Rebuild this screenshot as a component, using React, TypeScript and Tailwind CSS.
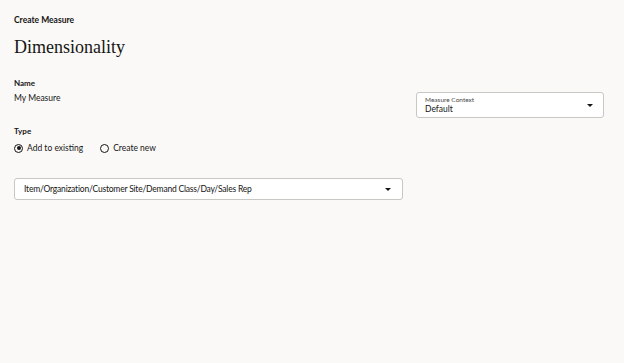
import React from "react";

const sans = { fontFamily: "Lato, 'Noto Sans', sans-serif" };

function Caret() {
  return (
    <svg width="6" height="3" viewBox="0 0 6 3" className="block">
      <path d="M0 0 H6 L3 3 Z" fill="#161513" />
    </svg>
  );
}

function Radio({ checked, label }: { checked: boolean; label: string }) {
  return (
    <div className="flex items-center gap-[4px]">
      <span className="w-[9px] h-[9px] rounded-full border border-[#161513] flex items-center justify-center">
        {checked && <span className="w-[4px] h-[4px] rounded-full bg-[#161513]" />}
      </span>
      <span className="text-[8.5px] leading-[12px] text-[#161513]">{label}</span>
    </div>
  );
}

export default function App() {
  return (
    <div className="w-[624px] h-[363px] bg-[#faf9f8] text-[#161513] overflow-hidden" style={sans}>
      <div className="pl-[14px] pr-[20px] pt-[14px]">
        <div className="text-[8.5px] leading-[12px] font-bold">Create Measure</div>
        <div
          className="mt-[9px] text-[18px] leading-[24px]"
          style={{ fontFamily: "'Liberation Serif', 'Times New Roman', serif" }}
        >
          Dimensionality
        </div>
        <div className="flex justify-between mt-[19px]">
          <div className="flex flex-col">
            <div className="text-[8px] leading-[10px] font-bold">Name</div>
            <div className="mt-[4px] text-[8.5px] leading-[12px]">My Measure</div>
          </div>
          <div className="mt-[14px] w-[188px] h-[26px] border border-[#c9c7c4] rounded-[3px] bg-white flex items-center justify-between pl-[8px] pr-[10px]">
            <div className="flex flex-col">
              <span className="text-[6.5px] leading-[8px] text-[#4a4845]">Measure Context</span>
              <span className="text-[8.5px] leading-[10px]">Default</span>
            </div>
            <Caret />
          </div>
        </div>
        <div className="mt-[8px] text-[8px] leading-[10px] font-bold">Type</div>
        <div className="mt-[6px] flex items-center gap-[17px]">
          <Radio checked label="Add to existing" />
          <Radio checked={false} label="Create new" />
        </div>
        <div className="mt-[24px] w-[389px] h-[22px] border border-[#c9c7c4] rounded-[3px] bg-white flex items-center justify-between pl-[9px] pr-[11px]">
          <span className="text-[8.5px] leading-[12px] tracking-[-0.2px]">Item/Organization/Customer Site/Demand Class/Day/Sales Rep</span>
          <Caret />
        </div>
      </div>
    </div>
  );
}
